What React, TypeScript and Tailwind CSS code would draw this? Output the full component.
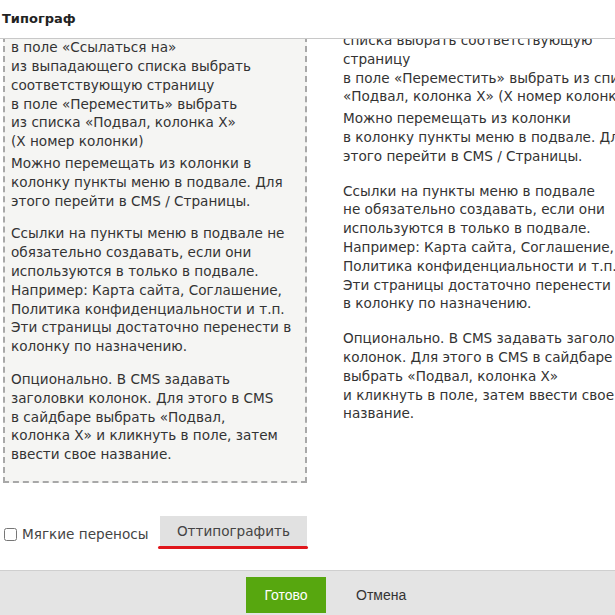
import { ReactNode } from "react";

const leftParas: string[][] = [
  [
    "в поле «Ссылаться на»",
    "из выпадающего списка выбрать",
    "соответствующую страницу",
    "в поле «Переместить» выбрать",
    "из списка «Подвал, колонка X»",
    "(X номер колонки)",
  ],
  [
    "Можно перемещать из колонки в",
    "колонку пункты меню в подвале. Для",
    "этого перейти в CMS / Страницы.",
  ],
  [
    "Ссылки на пункты меню в подвале не",
    "обязательно создавать, если они",
    "используются в только в подвале.",
    "Например: Карта сайта, Соглашение,",
    "Политика конфиденциальности и т.п.",
    "Эти страницы достаточно перенести в",
    "колонку по назначению.",
  ],
  [
    "Опционально. В CMS задавать",
    "заголовки колонок. Для этого в CMS",
    "в сайдбаре выбрать «Подвал,",
    "колонка X» и кликнуть в поле, затем",
    "ввести свое название.",
  ],
];

const rightParas: string[][] = [
  [
    "списка выбрать соответствующую",
    "страницу",
    "в поле «Переместить» выбрать из списка",
    "«Подвал, колонка X» (X номер колонки)",
  ],
  [
    "Можно перемещать из колонки",
    "в колонку пункты меню в подвале. Для",
    "этого перейти в CMS / Страницы.",
  ],
  [
    "Ссылки на пункты меню в подвале",
    "не обязательно создавать, если они",
    "используются в только в подвале.",
    "Например: Карта сайта, Соглашение,",
    "Политика конфиденциальности и т.п.",
    "Эти страницы достаточно перенести",
    "в колонку по назначению.",
  ],
  [
    "Опционально. В CMS задавать заголовки",
    "колонок. Для этого в CMS в сайдбаре",
    "выбрать «Подвал, колонка X»",
    "и кликнуть в поле, затем ввести свое",
    "название.",
  ],
];

const Lines = ({ lines }: { lines: string[] }) => {
  const out: ReactNode[] = [];
  lines.forEach((l, i) => {
    if (i > 0) out.push(<br key={"b" + i} />);
    out.push(l);
  });
  return <>{out}</>;
};

export default function App() {
  return (
    <div className="w-[615px] h-[615px] overflow-hidden bg-white text-[#333] font-['DejaVu_Sans',sans-serif] flex flex-col">
      <div className="h-[39px] shrink-0 border-b border-[#c8c8c8] flex items-center pl-[2px]">
        <span className="text-[13px] font-bold text-[#222]">Типограф</span>
      </div>

      <div className="h-[461px] shrink-0 overflow-hidden flex">
        {/* source text, scrolled to the bottom */}
        <div className="w-[304px] shrink-0 self-end mb-[17px] ml-[3px] bg-[#f5f5f3] border-2 border-dashed border-[#a8a8a8] pl-[6px] pr-2 pb-[17px] text-[13.6px] leading-[18.8px] whitespace-nowrap">
          <p>
            <Lines lines={leftParas[0]} />
          </p>
          <p className="mt-[3px]">
            <Lines lines={leftParas[1]} />
          </p>
          <p className="mt-[14px]">
            <Lines lines={leftParas[2]} />
          </p>
          <p className="mt-[14px]">
            <Lines lines={leftParas[3]} />
          </p>
        </div>

        {/* typographed result */}
        <div className="ml-[36px] -mt-[8px] text-[13.6px] leading-[18.8px] whitespace-nowrap">
          <p>
            <Lines lines={rightParas[0]} />
          </p>
          <p className="mt-[3px]">
            <Lines lines={rightParas[1]} />
          </p>
          <p className="mt-[16px]">
            <Lines lines={rightParas[2]} />
          </p>
          <p className="mt-[16px]">
            <Lines lines={rightParas[3]} />
          </p>
        </div>
      </div>

      <div className="h-[70px] shrink-0 flex items-start pt-[16px]">
        <label className="flex items-center mt-[8px] text-[13.6px] text-[#444]">
          <input type="checkbox" className="w-[13px] h-[13px] ml-[4px] mr-[5px]" />
          Мягкие переносы
        </label>
        <div className="ml-[10px] flex flex-col items-center">
          <button className="w-[147px] h-[30px] bg-[#e1e1e1] text-[13.6px] text-[#444]">
            Оттипографить
          </button>
          <div className="w-[150px] h-[3px] rounded-full bg-[#e0161b]" />
        </div>
      </div>

      <div className="flex-1 border-t border-[#cfcfcf] bg-[#e4e4e4] flex items-start pt-[6px] pl-[246px] font-['Liberation_Sans',Arial,sans-serif] text-[14px]">
        <button className="w-[80px] h-[36px] bg-[#57a70f] text-white">Готово</button>
        <button className="ml-[30px] h-[36px] text-[#333]">Отмена</button>
      </div>
    </div>
  );
}
